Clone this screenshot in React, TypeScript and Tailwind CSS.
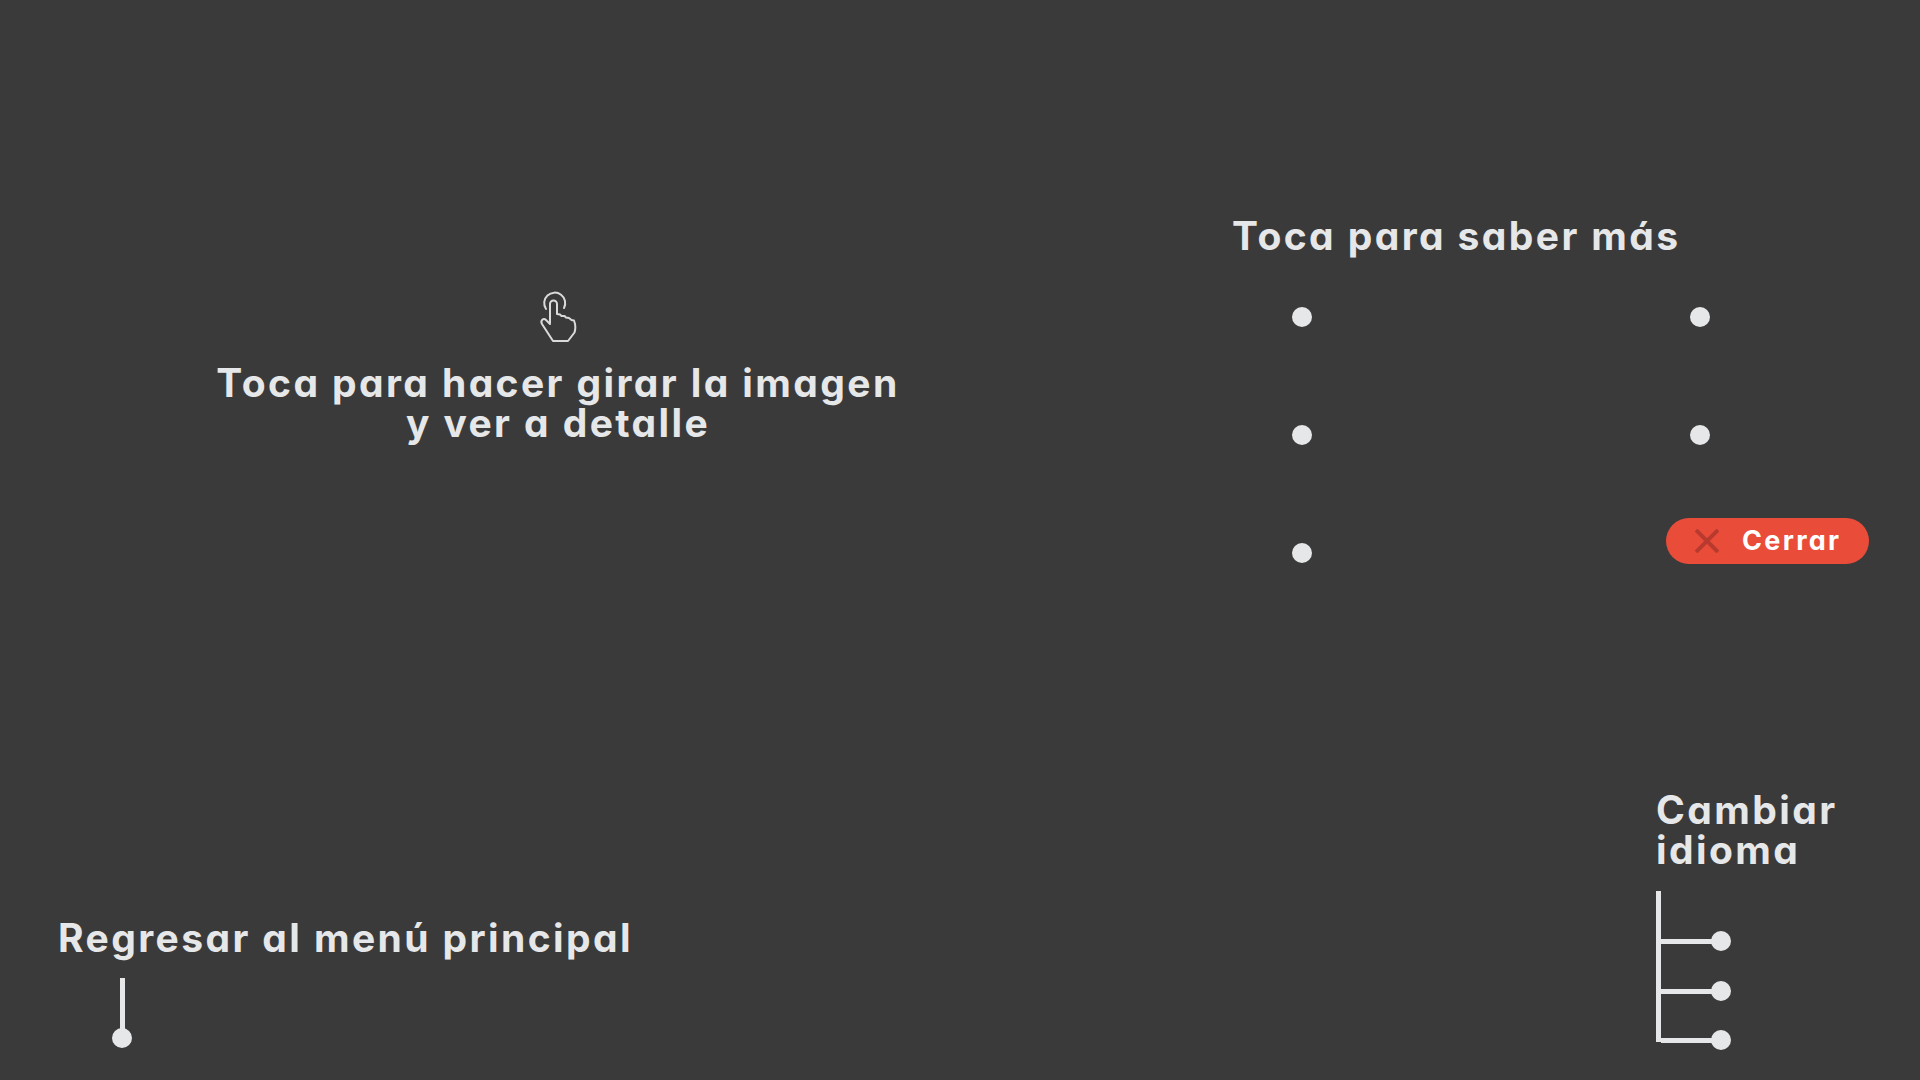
const hintText = "font-['Inter',sans-serif] [font-feature-settings:'cv11'] font-bold text-[39px] leading-[40px] tracking-[2.4px] text-[#e6e7e8]";

function Dot({ className = "" }: { className?: string }) {
  return <div className={`h-5 w-5 rounded-full bg-[#e6e7e8] ${className}`} />;
}

function HandIcon() {
  return (
    <svg className="ml-[352px] self-start" width="80" height="70" viewBox="0 0 80 70" fill="none" stroke="#d9dadc" strokeWidth="2" strokeLinecap="round" strokeLinejoin="round">
      <path d="M36 29 A10.5 10.5 0 1 1 54 28" />
      <path d="M40 43 V24 a3.5 3.5 0 0 1 7 0 V34 l3 0.5 1.5 1.5 3 0 1.5 1.5 3 0.5 2.5 2 2.5 0.5 c1.500 4 1.500 9 0.500 12 L58 61 H43 L32 44 c-2-3.500 1.500-6.500 4-4 L40 44" />
    </svg>
  );
}

export default function App() {
  return (
    <div className="relative h-[1080px] w-[1920px] overflow-hidden bg-[#3a3a3a]">
      {/* rotate hint */}
      <div className="absolute left-[158px] top-[280px] flex w-[800px] flex-col items-center">
        <HandIcon />
        <p className={`mt-[13px] text-center ${hintText}`}>
          Toca para hacer girar la imagen
          <br />y ver a detalle
        </p>
      </div>

      {/* hotspots */}
      <div className="absolute left-[1232px] top-[216px]">
        <p className={hintText}>Toca para saber más</p>
        <div className="mt-[51px] ml-[60px] grid w-[418px] grid-cols-[398px_20px] gap-y-[98px]">
          <Dot />
          <Dot />
          <Dot />
          <Dot />
          <Dot />
        </div>
      </div>

      <button className="absolute left-[1666px] top-[518px] flex h-[46px] w-[203px] items-center rounded-full bg-[#ea4c3a] pl-[29px]">
        <svg width="24" height="24" viewBox="0 0 24 24" stroke="#b83a2e" strokeWidth="4" fill="none">
          <path d="M1 1 L23 23 M23 1 L1 23" />
        </svg>
        <span className="ml-[23px] font-['Inter',sans-serif] [font-feature-settings:'cv11'] text-[27px] font-bold tracking-[2.3px] text-white">Cerrar</span>
      </button>

      {/* language */}
      <div className="absolute left-[1656px] top-[790px]">
        <p className={hintText}>
          Cambiar
          <br />
          idioma
        </p>
        <div className="mt-[21px] flex h-[151px] w-[76px] flex-col border-l-[5px] border-[#e6e7e8]">
          <div className="mt-[40px] flex items-center">
            <div className="h-[5px] w-[51px] bg-[#e6e7e8]" />
            <Dot className="-ml-[1px]" />
          </div>
          <div className="mt-[30px] flex items-center">
            <div className="h-[5px] w-[51px] bg-[#e6e7e8]" />
            <Dot className="-ml-[1px]" />
          </div>
          <div className="mt-[29px] flex items-center">
            <div className="h-[5px] w-[51px] bg-[#e6e7e8]" />
            <Dot className="-ml-[1px]" />
          </div>
        </div>
      </div>

      {/* back */}
      <div className="absolute left-[58px] top-[918px]">
        <p className={hintText}>Regresar al menú principal</p>
        <div className="ml-[54px] mt-[20px] flex w-5 flex-col items-center">
          <div className="h-[52px] w-[5px] bg-[#e6e7e8]" />
          <Dot className="-mt-[2px]" />
        </div>
      </div>
    </div>
  );
}
